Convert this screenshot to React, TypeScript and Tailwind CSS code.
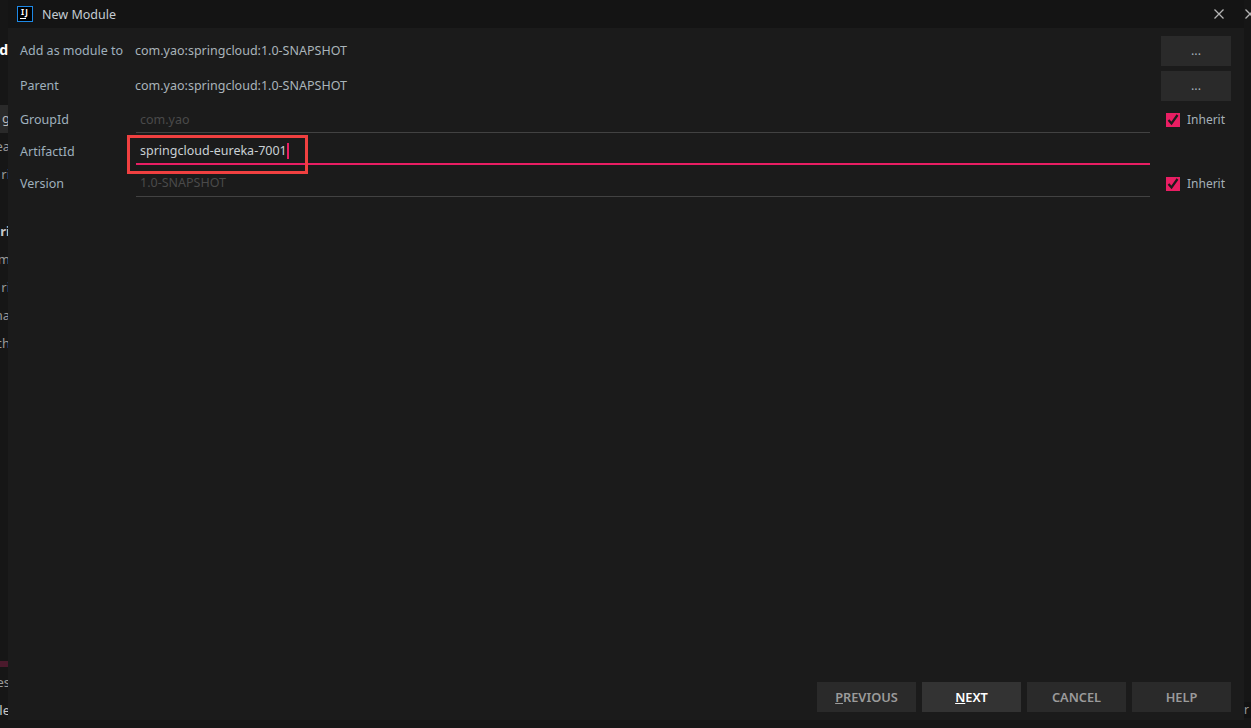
import { useState } from "react"

const font = "font-['Noto_Sans',sans-serif]"

function SideText({ text, className }: { text: string; className?: string }) {
  return (
    <div className={`flex h-[28px] items-center justify-end overflow-hidden whitespace-nowrap text-[13px] text-[#9a9a9a] ${className ?? ""}`}>
      <span className="-mr-[2px]">{text}</span>
    </div>
  )
}

function Check({ label, pad }: { label: string; pad: string }) {
  return (
    <div className={`flex items-center gap-[7px] pl-[16px] ${pad}`}>
      <span className="flex h-[14px] w-[14px] items-center justify-center bg-[#e91e63]">
        <svg width="12" height="12" viewBox="0 0 12 12" fill="none">
          <path d="M1.5 6 L4.5 9.5 L10.5 1" stroke="#1b1b1b" strokeWidth="2.2" />
        </svg>
      </span>
      <span className="text-[12px] text-[#a5b0b8]">{label}</span>
    </div>
  )
}

function Field({ label, value, focused, check, height, pad }: { label: string; value: string; focused?: boolean; check?: boolean; height: string; pad: string }) {
  return (
    <div className={`flex ${height}`}>
      <span className={`flex w-[116px] items-center ${pad}`}>{label}</span>
      <div className={`flex w-[1014px] items-center pl-[4px] pt-[6px] ${focused ? "border-b-2 border-[#e91e63] text-[#c9d0d4]" : "border-b border-[#424242] text-[#4a4a4a]"}`}>
        {value}
        {focused && <span className="h-[16px] w-[2px] bg-[#e91e63]" />}
      </div>
      {check && <Check label="Inherit" pad={pad} />}
    </div>
  )
}

function FooterButton({ label, mnemonic, active }: { label: string; mnemonic?: boolean; active?: boolean }) {
  return (
    <button className={`h-[30px] w-[99px] pt-[1px] text-[12.8px] font-semibold ${active ? "bg-[#333333] text-white" : "bg-[#2a2a2a] text-[#9b9b9b]"}`}>
      {mnemonic ? <span className="underline">{label[0]}</span> : label[0]}
      {label.slice(1)}
    </button>
  )
}

function CloseIcon({ className }: { className?: string }) {
  return (
    <svg className={`shrink-0 ${className ?? ""}`} width="12" height="12" viewBox="0 0 12 12" fill="none">
      <path d="M1.5 1.5 L10.5 10.5 M10.5 1.5 L1.5 10.5" stroke="#b4b4b4" strokeWidth="1.3" />
    </svg>
  )
}

export default function App() {
  const [artifact] = useState("springcloud-eureka-7001")

  return (
    <div className={`relative flex h-[728px] w-[1251px] overflow-hidden bg-[#161616] ${font}`}>
      {/* what is left of the window behind the dialog */}
      <div className="w-[8px] shrink-0 overflow-hidden">
        <div className="h-[35px]" />
        <div className="flex h-[28px] items-center justify-end overflow-hidden text-[14px] font-bold text-white">d</div>
        <div className="h-[42px]" />
        <SideText text="g" className="bg-[#2a2a2a] text-[#bdbdbd]" />
        <SideText text="ea" />
        <SideText text="ri" />
        <div className="h-[29px]" />
        <SideText text="ri" className="font-bold text-[#c8c8c8]" />
        <SideText text="m" />
        <SideText text="ri" />
        <SideText text="na" />
        <SideText text="ch" />
        <div className="h-[303px]" />
        <div className="h-[6px] bg-[#4a1a2c]" />
        <div className="h-[2px]" />
        <SideText text="es" />
        <SideText text="le" className="text-[#c8c8c8]" />
      </div>

      <div className="flex w-[1236px] shrink-0 flex-col">
        <div className="flex h-[720px] flex-col bg-[#1b1b1b]">
          <div className="flex h-[28px] items-center bg-[#141414] pl-[9px] pr-[19px]">
            <span className="relative flex h-[16px] w-[16px] items-start justify-center border border-[#1e88e5] bg-black text-[8px] font-bold leading-[10px] tracking-[1px] text-white">
              IJ
              <span className="absolute bottom-[2px] left-[2px] h-[1px] w-[6px] bg-white" />
            </span>
            <span className="ml-[9px] pt-[2px] text-[12.5px] text-[#c4ccd2]">New Module</span>
            <CloseIcon className="ml-auto" />
          </div>

          <div className="flex flex-1 flex-col pl-[12px] pt-[8px] text-[12.5px] text-[#9fb0bd]">
            <div className="mb-[5px] flex h-[30px] items-center">
              <span className="w-[115px]">Add as module to</span>
              <span className="text-[#aab4ba]">com.yao:springcloud:1.0-SNAPSHOT</span>
              <button className="ml-auto mr-[13px] h-[30px] w-[70px] bg-[#2a2a2a] text-[#a5b0b8]">...</button>
            </div>
            <div className="mb-[2px] flex h-[30px] items-center">
              <span className="w-[115px]">Parent</span>
              <span className="text-[#aab4ba]">com.yao:springcloud:1.0-SNAPSHOT</span>
              <button className="ml-auto mr-[13px] h-[30px] w-[70px] bg-[#2a2a2a] text-[#a5b0b8]">...</button>
            </div>
            <Field label="GroupId" value="com.yao" check height="h-[30px]" pad="pt-[4px]" />
            <Field label="ArtifactId" value={artifact} focused height="h-[32px]" pad="pt-[6px]" />
            <Field label="Version" value="1.0-SNAPSHOT" check height="h-[32px]" pad="pt-[6px]" />

            <div className="mr-[13px] mt-auto mb-[8px] flex justify-end gap-[6px]">
              <FooterButton label="PREVIOUS" mnemonic />
              <FooterButton label="NEXT" mnemonic active />
              <FooterButton label="CANCEL" />
              <FooterButton label="HELP" />
            </div>
          </div>
        </div>
      </div>

      <div className="w-[7px] shrink-0 overflow-hidden">
        <div className="flex h-[28px] items-center">
          <CloseIcon />
        </div>
        <div className="h-[674px]" />
        <div className="flex h-[16px] items-center bg-[#121212] text-[12px] text-[#9a9a9a]">r</div>
      </div>

      {/* red annotation drawn over the screenshot */}
      <div className="absolute left-[127px] top-[135px] h-[39px] w-[181px] border-[3px] border-[#f04040]" />
    </div>
  )
}
